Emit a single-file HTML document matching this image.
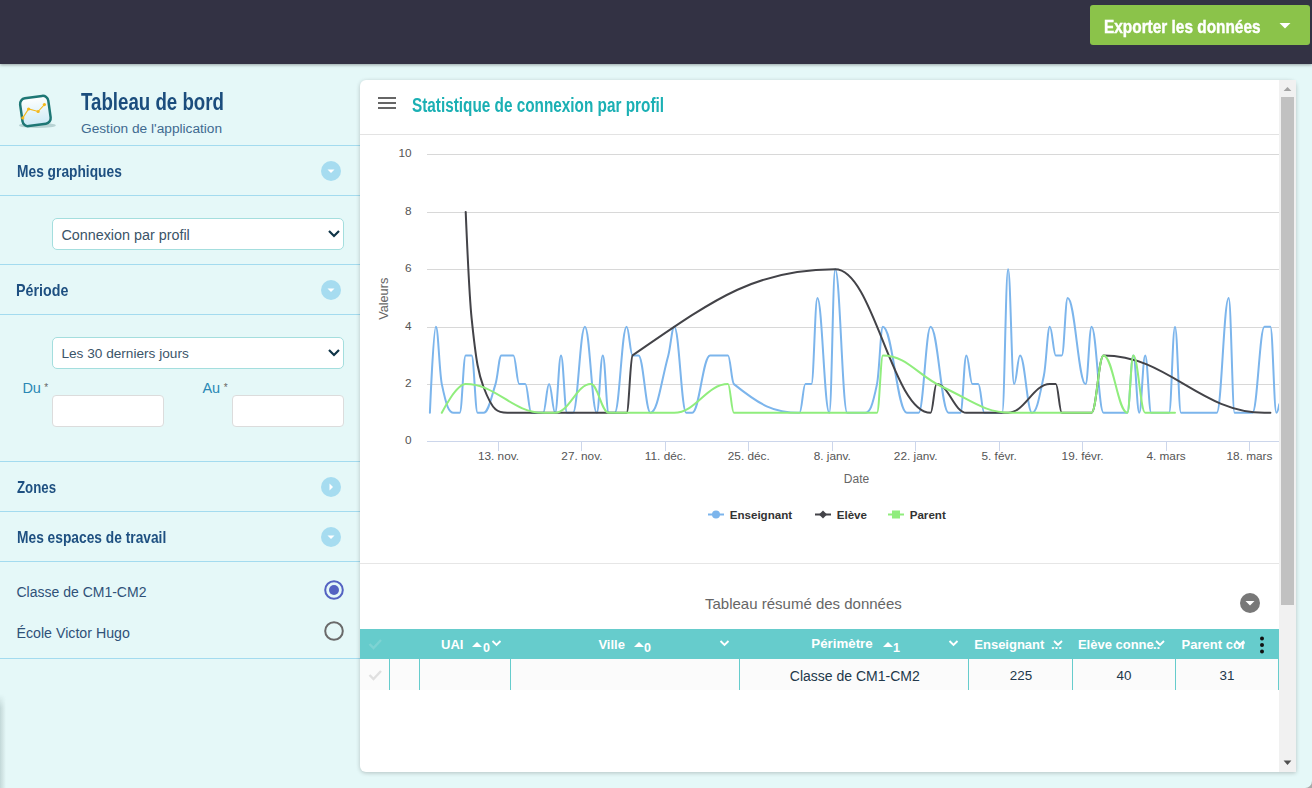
<!DOCTYPE html>
<html><head><meta charset="utf-8"><style>
html,body{margin:0;padding:0}
body{width:1312px;height:788px;position:relative;overflow:hidden;background:#e5f8f8;font-family:"Liberation Sans",sans-serif}
.t{position:absolute;white-space:nowrap}
</style></head><body>
<div style="position:absolute;left:0px;top:0px;width:1312px;height:64px;background:#333244;box-shadow:0 1px 3px rgba(0,0,0,.35);z-index:2"></div>
<div style="position:absolute;left:1090px;top:5px;width:220px;height:40px;background:#8bc34a;border-radius:3px;z-index:3"></div>
<div class="t" style="left:1104.0px;top:16.62px;font-size:19.00px;line-height:19.00px;color:#fff;font-weight:700;transform:scaleX(0.810);transform-origin:0 0;z-index:4;-webkit-text-stroke:0.45px #fff">Exporter les données</div>
<svg style="position:absolute;left:0;top:0;z-index:4" width="1312" height="64"><polygon points="1279.5,23 1290.5,23 1285,28.5" fill="#fff"/></svg>
<div style="position:absolute;left:0px;top:145px;width:360px;height:1px;background:#a3dbef"></div>
<div style="position:absolute;left:0px;top:195px;width:360px;height:1px;background:#a3dbef"></div>
<div style="position:absolute;left:0px;top:264px;width:360px;height:1px;background:#a3dbef"></div>
<div style="position:absolute;left:0px;top:314px;width:360px;height:1px;background:#a3dbef"></div>
<div style="position:absolute;left:0px;top:461px;width:360px;height:1px;background:#a3dbef"></div>
<div style="position:absolute;left:0px;top:511px;width:360px;height:1px;background:#a3dbef"></div>
<div style="position:absolute;left:0px;top:561px;width:360px;height:1px;background:#a3dbef"></div>
<div style="position:absolute;left:0px;top:658px;width:360px;height:1px;background:#a3dbef"></div>
<svg style="position:absolute;left:10px;top:86px" width="56" height="50" viewBox="0 0 56 50">
<defs><linearGradient id="ig" x1="0" y1="0" x2="0" y2="1"><stop offset="0" stop-color="#ffffff"/><stop offset="1" stop-color="#cdeaf6"/></linearGradient></defs>
<ellipse cx="27.4" cy="39.4" rx="18.4" ry="2.6" fill="#b8d3d4"/>
<g transform="rotate(-8 25.4 25)">
<rect x="11.2" y="11" width="28.4" height="28" rx="5.5" fill="url(#ig)" stroke="#1e7775" stroke-width="2.5"/>
</g>
<polyline points="12.8,31.9 18.6,23 28.1,25.5 34.4,18.6" fill="none" stroke="#f4b81c" stroke-width="1.1"/>
<circle cx="12.8" cy="31.9" r="1.6" fill="#f4b81c"/><circle cx="18.6" cy="23" r="1.6" fill="#f4b81c"/><circle cx="28.1" cy="25.5" r="1.6" fill="#f4b81c"/><circle cx="34.4" cy="18.6" r="1.6" fill="#f4b81c"/>
</svg>
<div class="t" style="left:80.8px;top:90.96px;font-size:23.20px;line-height:23.20px;color:#1b4d7d;font-weight:700;transform:scaleX(0.806);transform-origin:0 0;">Tableau de bord</div>
<div class="t" style="left:81.0px;top:122.40px;font-size:13.70px;line-height:13.70px;color:#3f6a90;font-weight:400;">Gestion de l'application</div>
<div class="t" style="left:16.8px;top:162.61px;font-size:17.00px;line-height:17.00px;color:#1e5081;font-weight:700;transform:scaleX(0.810);transform-origin:0 0;">Mes graphiques</div>
<svg style="position:absolute;left:320px;top:160px" width="22" height="22"><circle cx="11" cy="11" r="10" fill="#a6dcf0"/><polygon points="7.5,9.5 14.5,9.5 11,13" fill="#fff"/></svg>
<div class="t" style="left:16.3px;top:282.01px;font-size:17.00px;line-height:17.00px;color:#1e5081;font-weight:700;transform:scaleX(0.840);transform-origin:0 0;">Période</div>
<svg style="position:absolute;left:320px;top:279px" width="22" height="22"><circle cx="11" cy="11" r="10" fill="#a6dcf0"/><polygon points="7.5,9.5 14.5,9.5 11,13" fill="#fff"/></svg>
<div class="t" style="left:16.9px;top:478.71px;font-size:17.00px;line-height:17.00px;color:#1e5081;font-weight:700;transform:scaleX(0.780);transform-origin:0 0;">Zones</div>
<svg style="position:absolute;left:320px;top:476px" width="22" height="22"><circle cx="11" cy="11" r="10" fill="#a6dcf0"/><polygon points="9.5,7.5 9.5,14.5 13,11" fill="#fff"/></svg>
<div class="t" style="left:16.8px;top:528.91px;font-size:17.00px;line-height:17.00px;color:#1e5081;font-weight:700;transform:scaleX(0.810);transform-origin:0 0;">Mes espaces de travail</div>
<svg style="position:absolute;left:320px;top:526px" width="22" height="22"><circle cx="11" cy="11" r="10" fill="#a6dcf0"/><polygon points="7.5,9.5 14.5,9.5 11,13" fill="#fff"/></svg>
<div style="position:absolute;left:52px;top:218px;width:292px;height:32px;box-sizing:border-box;background:#fff;border:1px solid #a4dede;border-radius:5px"></div><div class="t" style="left:61.4px;top:227.85px;font-size:14.35px;line-height:14.35px;color:#3b5468;font-weight:400;">Connexion par profil</div><svg style="position:absolute;left:326px;top:228px" width="16" height="12"><polyline points="3,3 8,8 13,3" fill="none" stroke="#0f3447" stroke-width="2.2"/></svg>
<div style="position:absolute;left:52px;top:337px;width:292px;height:32px;box-sizing:border-box;background:#fff;border:1px solid #a4dede;border-radius:5px"></div><div class="t" style="left:61.4px;top:347.45px;font-size:13.65px;line-height:13.65px;color:#3b5468;font-weight:400;">Les 30 derniers jours</div><svg style="position:absolute;left:326px;top:347px" width="16" height="12"><polyline points="3,3 8,8 13,3" fill="none" stroke="#0f3447" stroke-width="2.2"/></svg>
<div class="t" style="left:22.4px;top:380.73px;font-size:14.50px;line-height:14.50px;color:#2a88b5;font-weight:400;">Du</div>
<div class="t" style="left:44.3px;top:383.04px;font-size:10.00px;line-height:10.00px;color:#666;font-weight:400;">*</div>
<div class="t" style="left:202.4px;top:380.73px;font-size:14.50px;line-height:14.50px;color:#2a88b5;font-weight:400;">Au</div>
<div class="t" style="left:223.8px;top:383.04px;font-size:10.00px;line-height:10.00px;color:#666;font-weight:400;">*</div>
<div style="position:absolute;left:52px;top:395px;width:112px;height:32px;box-sizing:border-box;background:#fff;border:1px solid #dcdcdc;border-radius:4px"></div>
<div style="position:absolute;left:232px;top:395px;width:112px;height:32px;box-sizing:border-box;background:#fff;border:1px solid #dcdcdc;border-radius:4px"></div>
<div class="t" style="left:16.5px;top:584.75px;font-size:14.00px;line-height:14.00px;color:#2f5178;font-weight:400;">Classe de CM1-CM2</div>
<div class="t" style="left:16.5px;top:625.58px;font-size:14.20px;line-height:14.20px;color:#2f5178;font-weight:400;">École Victor Hugo</div>
<svg style="position:absolute;left:322px;top:578px" width="24" height="66"><circle cx="12" cy="12" r="8.8" fill="none" stroke="#5463c2" stroke-width="2"/><circle cx="12" cy="12" r="5" fill="#5463c2"/><circle cx="12" cy="53" r="8.8" fill="none" stroke="#6a6a6a" stroke-width="2"/></svg>
<div style="position:absolute;left:360px;top:80px;width:936px;height:692px;background:#fff;border-radius:6px 6px 0 6px;box-shadow:0 1px 4px rgba(0,0,0,.22)"></div>
<svg style="position:absolute;left:376px;top:95px" width="22" height="16"><rect x="2" y="2" width="18" height="2" fill="#666"/><rect x="2" y="7" width="18" height="2" fill="#666"/><rect x="2" y="12" width="18" height="2" fill="#666"/></svg>
<div class="t" style="left:412.2px;top:96.31px;font-size:19.60px;line-height:19.60px;color:#1bb0b4;font-weight:700;transform:scaleX(0.782);transform-origin:0 0;">Statistique de connexion par profil</div>
<div style="position:absolute;left:360px;top:134px;width:919px;height:1px;background:#e3e3e3"></div>
<svg style="position:absolute;left:0;top:0" width="1312" height="788" font-family="Liberation Sans" font-size="11.8" fill="#555">
<line x1="427" y1="154.5" x2="1279" y2="154.5" stroke="#d8d8d8" stroke-width="1"/><text x="411.5" y="157.4" text-anchor="end">10</text><line x1="427" y1="212.5" x2="1279" y2="212.5" stroke="#d8d8d8" stroke-width="1"/><text x="411.5" y="215.4" text-anchor="end">8</text><line x1="427" y1="269.5" x2="1279" y2="269.5" stroke="#d8d8d8" stroke-width="1"/><text x="411.5" y="272.4" text-anchor="end">6</text><line x1="427" y1="327.5" x2="1279" y2="327.5" stroke="#d8d8d8" stroke-width="1"/><text x="411.5" y="330.4" text-anchor="end">4</text><line x1="427" y1="384.5" x2="1279" y2="384.5" stroke="#d8d8d8" stroke-width="1"/><text x="411.5" y="387.4" text-anchor="end">2</text><text x="411.5" y="444.3" text-anchor="end">0</text>
<line x1="427" y1="441.5" x2="1279" y2="441.5" stroke="#ccd6eb" stroke-width="1"/>
<line x1="498.5" y1="441" x2="498.5" y2="451" stroke="#ccd6eb" stroke-width="1"/><text x="498.5" y="460" text-anchor="middle">13. nov.</text><line x1="581.5" y1="441" x2="581.5" y2="451" stroke="#ccd6eb" stroke-width="1"/><text x="581.9" y="460" text-anchor="middle">27. nov.</text><line x1="665.5" y1="441" x2="665.5" y2="451" stroke="#ccd6eb" stroke-width="1"/><text x="665.4" y="460" text-anchor="middle">11. déc.</text><line x1="748.5" y1="441" x2="748.5" y2="451" stroke="#ccd6eb" stroke-width="1"/><text x="748.8" y="460" text-anchor="middle">25. déc.</text><line x1="832.5" y1="441" x2="832.5" y2="451" stroke="#ccd6eb" stroke-width="1"/><text x="832.3" y="460" text-anchor="middle">8. janv.</text><line x1="915.5" y1="441" x2="915.5" y2="451" stroke="#ccd6eb" stroke-width="1"/><text x="915.7" y="460" text-anchor="middle">22. janv.</text><line x1="999.5" y1="441" x2="999.5" y2="451" stroke="#ccd6eb" stroke-width="1"/><text x="999.2" y="460" text-anchor="middle">5. févr.</text><line x1="1082.5" y1="441" x2="1082.5" y2="451" stroke="#ccd6eb" stroke-width="1"/><text x="1082.6" y="460" text-anchor="middle">19. févr.</text><line x1="1166.5" y1="441" x2="1166.5" y2="451" stroke="#ccd6eb" stroke-width="1"/><text x="1166.1" y="460" text-anchor="middle">4. mars</text><line x1="1249.5" y1="441" x2="1249.5" y2="451" stroke="#ccd6eb" stroke-width="1"/><text x="1249.5" y="460" text-anchor="middle">18. mars</text>
<text transform="translate(388.3 298.8) rotate(-90)" text-anchor="middle" fill="#666" font-size="12.7">Valeurs</text>
<text x="856.5" y="483.4" text-anchor="middle" fill="#666" font-size="12">Date</text>
<defs><clipPath id="pc"><rect x="427" y="140" width="852" height="310"/></clipPath></defs><g fill="none" stroke-width="2" stroke-linejoin="round" stroke-linecap="round" clip-path="url(#pc)">
<path d="M429.9 412.8 C429.9 412.8 433.5 326.7 435.9 326.7 C438.2 326.7 439.4 372.6 441.8 384.1 C446.6 407.1 449.0 412.8 453.7 412.8 C456.1 412.8 457.3 412.8 459.7 412.8 C462.1 412.8 463.3 355.4 465.7 355.4 C468.1 355.4 469.2 355.4 471.6 355.4 C474.0 355.4 475.2 412.8 477.6 412.8 C480.0 412.8 481.2 412.8 483.5 412.8 C488.3 412.8 490.7 399.4 495.5 384.1 C497.9 376.4 499.0 355.4 501.4 355.4 C503.8 355.4 505.0 355.4 507.4 355.4 C509.8 355.4 511.0 355.4 513.4 355.4 C515.7 355.4 516.9 384.1 519.3 384.1 C521.7 384.1 522.9 384.1 525.3 384.1 C527.7 384.1 528.9 412.8 531.2 412.8 C536.0 412.8 538.4 412.8 543.2 412.8 C545.5 412.8 546.7 384.1 549.1 384.1 C551.5 384.1 552.7 412.8 555.1 412.8 C557.5 412.8 558.7 355.4 561.0 355.4 C563.4 355.4 564.6 412.8 567.0 412.8 C569.4 412.8 570.6 412.8 573.0 412.8 C577.7 412.8 580.1 326.7 584.9 326.7 C589.7 326.7 592.0 412.8 596.8 412.8 C599.2 412.8 600.4 355.4 602.8 355.4 C605.2 355.4 606.3 412.8 608.7 412.8 C611.1 412.8 612.3 412.8 614.7 412.8 C619.5 412.8 621.8 326.7 626.6 326.7 C629.0 326.7 630.2 355.4 632.6 355.4 C635.0 355.4 636.2 355.4 638.5 355.4 C643.3 355.4 645.7 412.8 650.5 412.8 C657.6 412.8 661.2 381.2 668.3 355.4 C670.7 346.8 671.9 326.7 674.3 326.7 C679.1 326.7 681.5 412.8 686.2 412.8 C688.6 412.8 689.8 412.8 692.2 412.8 C699.3 412.8 702.9 355.4 710.1 355.4 C717.2 355.4 720.8 355.4 728.0 355.4 C730.3 355.4 731.5 382.2 733.9 384.1 C760.1 405.1 773.3 412.8 799.5 412.8 C801.9 412.8 803.1 384.1 805.4 384.1 C807.8 384.1 809.0 384.1 811.4 384.1 C813.8 384.1 815.0 298.0 817.4 298.0 C822.1 298.0 824.5 412.8 829.3 412.8 C831.7 412.8 832.9 269.3 835.2 269.3 C840.0 269.3 842.4 412.8 847.2 412.8 C854.3 412.8 857.9 412.8 865.1 412.8 C869.8 412.8 872.2 407.1 877.0 384.1 C879.4 372.6 880.6 326.7 882.9 326.7 C892.5 326.7 897.2 412.8 906.8 412.8 C911.5 412.8 913.9 412.8 918.7 412.8 C923.5 412.8 925.9 326.7 930.6 326.7 C937.8 326.7 941.4 412.8 948.5 412.8 C953.3 412.8 955.7 412.8 960.4 412.8 C962.8 412.8 964.0 355.4 966.4 355.4 C968.8 355.4 970.0 384.1 972.4 384.1 C974.7 384.1 975.9 384.1 978.3 384.1 C980.7 384.1 981.9 412.8 984.3 412.8 C991.4 412.8 995.0 412.8 1002.2 412.8 C1004.5 412.8 1005.7 269.3 1008.1 269.3 C1010.5 269.3 1011.7 384.1 1014.1 384.1 C1016.5 384.1 1017.7 355.4 1020.0 355.4 C1024.8 355.4 1027.2 412.8 1032.0 412.8 C1036.7 412.8 1039.1 398.4 1043.9 375.5 C1046.3 364.0 1047.5 326.7 1049.8 326.7 C1052.2 326.7 1053.4 355.4 1055.8 355.4 C1058.2 355.4 1059.4 355.4 1061.8 355.4 C1064.2 355.4 1065.3 298.0 1067.7 298.0 C1074.9 298.0 1078.5 384.1 1085.6 384.1 C1088.0 384.1 1089.2 326.7 1091.6 326.7 C1096.3 326.7 1098.7 412.8 1103.5 412.8 C1113.0 412.8 1117.8 412.8 1127.3 412.8 C1129.7 412.8 1130.9 355.4 1133.3 355.4 C1135.7 355.4 1136.9 412.8 1139.3 412.8 C1141.6 412.8 1142.8 355.4 1145.2 355.4 C1147.6 355.4 1148.8 412.8 1151.2 412.8 C1158.3 412.8 1161.9 412.8 1169.1 412.8 C1171.4 412.8 1172.6 326.7 1175.0 326.7 C1177.4 326.7 1178.6 412.8 1181.0 412.8 C1195.3 412.8 1202.4 412.8 1216.8 412.8 C1221.5 412.8 1223.9 298.0 1228.7 298.0 C1231.1 298.0 1232.3 412.8 1234.6 412.8 C1241.8 412.8 1245.4 412.8 1252.5 412.8 C1257.3 412.8 1259.7 326.7 1264.4 326.7 C1266.8 326.7 1268.0 326.7 1270.4 326.7 C1272.8 326.7 1274.0 412.8 1276.4 412.8 C1277.6 412.8 1279.3 404.2 1279.3 404.2" stroke="#7cb5ec"/>
<path d="M465.7 211.9 C465.7 211.9 469.2 294.7 471.6 318.1 C476.4 364.8 478.8 374.3 483.5 387.0 C493.1 412.2 497.9 412.8 507.4 412.8 C555.1 412.8 578.9 412.8 626.6 412.8 C629.0 412.8 630.2 357.0 632.6 355.4 C713.6 299.6 754.2 269.3 835.2 269.3 C873.4 269.3 892.5 412.8 930.6 412.8 C933.0 412.8 934.2 384.1 936.6 384.1 C948.5 384.1 954.5 412.8 966.4 412.8 C983.1 412.8 991.4 412.8 1008.1 412.8 C1024.8 412.8 1033.2 384.1 1049.8 384.1 C1052.2 384.1 1053.4 384.1 1055.8 384.1 C1058.2 384.1 1059.4 412.8 1061.8 412.8 C1073.7 412.8 1079.6 412.8 1091.6 412.8 C1096.3 412.8 1098.7 355.4 1103.5 355.4 C1167.9 355.4 1200.1 412.8 1264.4 412.8 C1266.8 412.8 1270.4 412.8 1270.4 412.8" stroke="#434348"/>
<path d="M441.8 412.8 C441.8 412.8 456.1 384.1 465.7 384.1 C496.7 384.1 512.2 412.8 543.2 412.8 C547.9 412.8 550.3 412.8 555.1 412.8 C569.4 412.8 576.5 384.1 590.8 384.1 C598.0 384.1 601.6 412.8 608.7 412.8 C635.0 412.8 648.1 412.8 674.3 412.8 C695.8 412.8 706.5 384.1 728.0 384.1 C730.3 384.1 731.5 412.8 733.9 412.8 C791.1 412.8 819.7 412.8 877.0 412.8 C879.4 412.8 880.6 355.4 882.9 355.4 C906.8 355.4 918.7 376.3 942.5 387.0 C970.0 399.3 983.7 412.8 1011.1 412.8 C1043.3 412.8 1059.4 412.8 1091.6 412.8 C1096.3 412.8 1098.7 355.4 1103.5 355.4 C1113.0 355.4 1117.8 412.8 1127.3 412.8 C1129.7 412.8 1130.9 355.4 1133.3 355.4 C1138.1 355.4 1140.5 412.8 1145.2 412.8 C1157.1 412.8 1175.0 412.8 1175.0 412.8" stroke="#90ed7d"/>
</g>
<g>
<line x1="708" y1="514.5" x2="724" y2="514.5" stroke="#7cb5ec" stroke-width="2"/><circle cx="716" cy="514.5" r="4" fill="#7cb5ec"/>
<line x1="815" y1="514.5" x2="831" y2="514.5" stroke="#434348" stroke-width="2"/><polygon points="823,510.5 827,514.5 823,518.5 819,514.5" fill="#434348"/>
<line x1="888" y1="514.5" x2="904" y2="514.5" stroke="#90ed7d" stroke-width="2"/><rect x="892" y="510.5" width="8" height="8" fill="#90ed7d"/>
</g>
<g font-weight="bold" font-size="11.6" fill="#333">
<text x="729.7" y="519">Enseignant</text><text x="836.7" y="519">Elève</text><text x="909.7" y="519">Parent</text>
</g>
</svg>
<div style="position:absolute;left:360px;top:563px;width:919px;height:1px;background:#e6e6e6"></div>
<div class="t" style="left:705.0px;top:596.00px;font-size:15.00px;line-height:15.00px;color:#666;font-weight:400;">Tableau résumé des données</div>
<svg style="position:absolute;left:1239px;top:592px" width="22" height="22"><circle cx="11" cy="11" r="10" fill="#787878"/><polygon points="6.5,9 15.5,9 11,13.5" fill="#fff"/></svg>
<div style="position:absolute;left:360px;top:629px;width:919px;height:30px;background:#66cccc"></div>
<div style="position:absolute;left:360px;top:659px;width:919px;height:31px;background:#fbfbfb"></div>
<div style="position:absolute;left:389px;top:659px;width:1px;height:31px;background:#66cccc"></div>
<div style="position:absolute;left:419px;top:659px;width:1px;height:31px;background:#66cccc"></div>
<div style="position:absolute;left:510px;top:659px;width:1px;height:31px;background:#66cccc"></div>
<div style="position:absolute;left:739px;top:659px;width:1px;height:31px;background:#66cccc"></div>
<div style="position:absolute;left:968px;top:659px;width:1px;height:31px;background:#66cccc"></div>
<div style="position:absolute;left:1072px;top:659px;width:1px;height:31px;background:#66cccc"></div>
<div style="position:absolute;left:1175px;top:659px;width:1px;height:31px;background:#66cccc"></div>
<div style="position:absolute;left:1278px;top:659px;width:1px;height:31px;background:#66cccc"></div>
<div class="t" style="left:441.0px;top:637.50px;font-size:13.00px;line-height:13.00px;color:#fff;font-weight:700;">UAI</div>
<div class="t" style="left:598.4px;top:637.50px;font-size:13.00px;line-height:13.00px;color:#fff;font-weight:700;">Ville</div>
<div class="t" style="left:811.3px;top:637.24px;font-size:13.30px;line-height:13.30px;color:#fff;font-weight:700;">Périmètre</div>
<div class="t" style="left:974.3px;top:637.50px;font-size:13.00px;line-height:13.00px;color:#fff;font-weight:700;">Enseignant</div>
<div class="t" style="left:1077.9px;top:637.50px;font-size:13.00px;line-height:13.00px;color:#fff;font-weight:700;">Elève conne</div>
<div class="t" style="left:1181.6px;top:637.50px;font-size:13.00px;line-height:13.00px;color:#fff;font-weight:700;width:63px;overflow:hidden">Parent com</div>
<svg style="position:absolute;left:0;top:0" width="1312" height="788"><polygon points="472.0,647 482.0,647 477.0,642" fill="#fff"/><text x="483.0" y="652.2" font-family="Liberation Sans" font-weight="bold" font-size="12.5" fill="#fff">0</text><polyline points="492.5,641 496.5,645 500.5,641" fill="none" stroke="#fff" stroke-width="1.9"/><polygon points="634.0,647 644.0,647 639.0,642" fill="#fff"/><text x="644.0" y="652.2" font-family="Liberation Sans" font-weight="bold" font-size="12.5" fill="#fff">0</text><polyline points="720.5,641 724.5,645 728.5,641" fill="none" stroke="#fff" stroke-width="1.9"/><polygon points="883.0,647 893.0,647 888.0,642" fill="#fff"/><text x="893.0" y="652.2" font-family="Liberation Sans" font-weight="bold" font-size="12.5" fill="#fff">1</text><polyline points="949.5,641 953.5,645 957.5,641" fill="none" stroke="#fff" stroke-width="1.9"/><text x="1051" y="649" font-family="Liberation Sans" font-weight="bold" font-size="13" fill="#fff">...</text><polyline points="1054.0,641 1058.0,645 1062.0,641" fill="none" stroke="#fff" stroke-width="1.9"/><text x="1153" y="649" font-family="Liberation Sans" font-weight="bold" font-size="13" fill="#fff">..</text><polyline points="1156.0,641 1160.0,645 1164.0,641" fill="none" stroke="#fff" stroke-width="1.9"/><polyline points="1236.0,641 1240.0,645 1244.0,641" fill="none" stroke="#fff" stroke-width="1.9"/><rect x="1245" y="629" width="34" height="30" fill="#66cccc"/><circle cx="1262" cy="638.5" r="2" fill="#111"/><circle cx="1262" cy="645" r="2" fill="#111"/><circle cx="1262" cy="651.5" r="2" fill="#111"/><polyline points="369.5,644 373.5,648 381,640" fill="none" stroke="#7dd3d3" stroke-width="2.4"/><polyline points="369.5,675 373.5,679 381,671" fill="none" stroke="#e0e0e0" stroke-width="2.4"/></svg>
<div class="t" style="left:789.8px;top:668.95px;font-size:14.00px;line-height:14.00px;color:#22384a;font-weight:400;">Classe de CM1-CM2</div>
<div class="t" style="left:1021.0px;top:669.26px;width:0;font-size:13.40px;line-height:13.40px;color:#22384a;font-weight:400;display:flex;justify-content:center;">225</div>
<div class="t" style="left:1124.0px;top:669.26px;width:0;font-size:13.40px;line-height:13.40px;color:#22384a;font-weight:400;display:flex;justify-content:center;">40</div>
<div class="t" style="left:1227.0px;top:669.26px;width:0;font-size:13.40px;line-height:13.40px;color:#22384a;font-weight:400;display:flex;justify-content:center;">31</div>
<div style="position:absolute;left:0px;top:694px;width:6px;height:94px;background:linear-gradient(to right,rgba(60,90,90,.2),rgba(60,90,90,0));-webkit-mask-image:linear-gradient(to bottom,transparent,#000 14px)"></div>
<svg style="position:absolute;left:1290px;top:770px" width="22" height="18"><path d="M22 11 A7 7 0 0 1 15 18 L22 18 Z" fill="#aaaaaa"/></svg>
<div style="position:absolute;left:1279px;top:80px;width:17px;height:692px;background:#f1f1f1"></div>
<div style="position:absolute;left:1281px;top:97px;width:13px;height:508px;background:#c1c1c1"></div>
<svg style="position:absolute;left:1279px;top:80px" width="17" height="692"><polygon points="4.6,11 12.4,11 8.5,7" fill="#a3a3a3"/><polygon points="4.6,680.6 12.4,680.6 8.5,685" fill="#505050"/></svg>
</body></html>
